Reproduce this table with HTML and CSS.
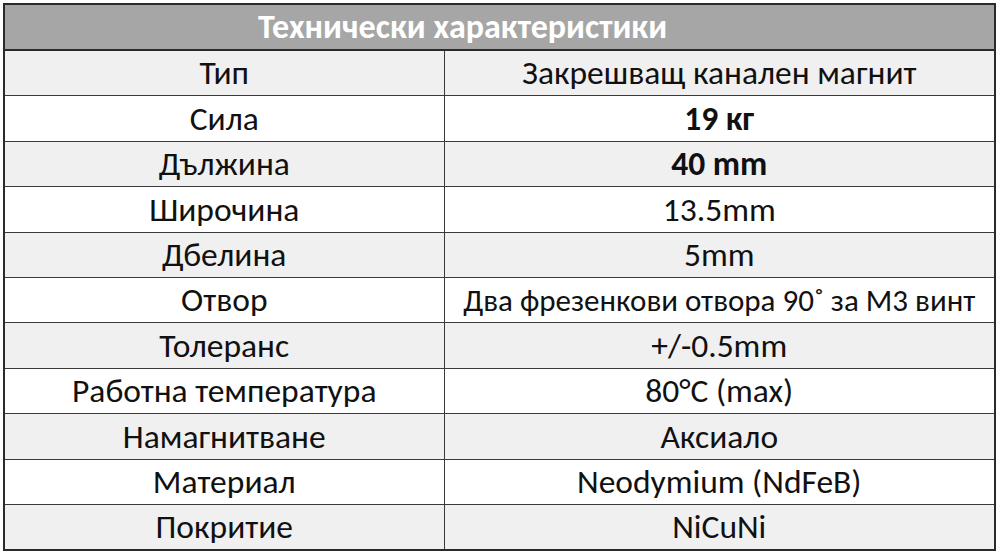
FILE: index.html
```html
<!DOCTYPE html>
<html lang="bg">
<head>
<meta charset="utf-8">
<title>Технически характеристики</title>
<link rel="stylesheet" href="styles.css">
</head>
<body>
<table class="specs">
  <colgroup><col class="col-label"><col class="col-value"></colgroup>
  <thead>
    <tr class="title-row"><th colspan="2" class="title">Технически характеристики</th></tr>
  </thead>
  <tbody>
    <tr class="alt"><td class="label">Тип</td><td class="value">Закрешващ канален магнит</td></tr>
    <tr><td class="label">Сила</td><td class="value strong">19 кг</td></tr>
    <tr class="alt"><td class="label">Дължина</td><td class="value strong">40 mm</td></tr>
    <tr><td class="label">Широчина</td><td class="value">13.5mm</td></tr>
    <tr class="alt"><td class="label">Дбелина</td><td class="value">5mm</td></tr>
    <tr><td class="label">Отвор</td><td class="value small">Два фрезенкови отвора 90˚ за М3 винт</td></tr>
    <tr class="alt"><td class="label">Толеранс</td><td class="value">+/-0.5mm</td></tr>
    <tr><td class="label">Работна температура</td><td class="value">80°C (max)</td></tr>
    <tr class="alt"><td class="label">Намагнитване</td><td class="value">Аксиало</td></tr>
    <tr><td class="label">Материал</td><td class="value">Neodymium (NdFeB)</td></tr>
    <tr class="alt"><td class="label">Покритие</td><td class="value">NiCuNi</td></tr>
  </tbody>
</table>
</body>
</html>
```
FILE: styles.css
```css
html, body {
  margin: 0;
  padding: 0;
  background: #ffffff;
}
body {
  padding: 3px 0 0 3px;
  font-family: "Carlito", "Open Sans", "Noto Sans", sans-serif;
  color: #111111;
}
.specs {
  width: 993px;
  border-collapse: collapse;
  border: 2px solid #2a2a2a;
  table-layout: fixed;
}
.col-label {
  width: 440px;
}
.title {
  height: 44px;
  background: #a6a6a6;
  color: #ffffff;
  font-weight: 700;
  font-size: 34px;
  text-align: left;
  padding: 0 0 0 253px;
  border-bottom: 2px solid #2a2a2a;
  line-height: 1;
}
.specs td {
  height: 44.4px;
  padding: 0;
  text-align: center;
  vertical-align: middle;
  font-size: 33.5px;
  line-height: 1;
  border: 1px solid #3a3a3a;
}
.specs tr.alt td {
  background: #f0f0f0;
}
.specs td.strong {
  font-weight: 700;
}
.specs td.small {
  font-size: 31px;
  white-space: nowrap;
}
```
